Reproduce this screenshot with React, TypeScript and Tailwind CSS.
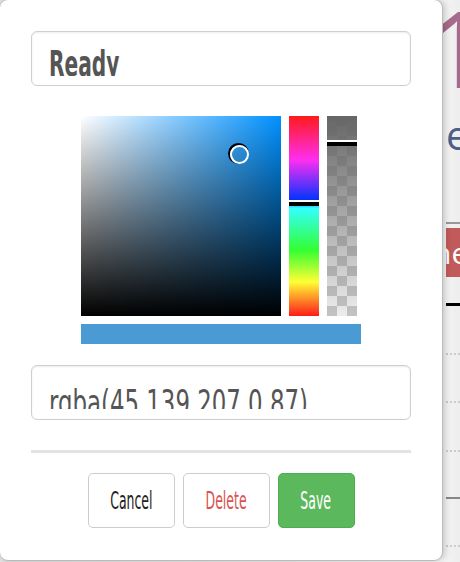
const condensed = { fontFamily: '"DejaVu Sans", "Liberation Sans", sans-serif' }

function Field({ text, bold }: { text: string; bold?: boolean }) {
  return (
    <div className="h-[55px] rounded-[6px] border-[1.5px] border-[#cfcfcf] bg-white px-[17px] shadow-[inset_0_1px_2px_rgba(0,0,0,0.08)]">
      <div className={bold ? "h-[44px] overflow-hidden" : "h-[43px] overflow-hidden"}>
        <div
          style={condensed}
          className={
            bold
              ? "pt-[12px] text-[36px] leading-[40px] font-bold text-[#555] whitespace-nowrap"
              : "pt-[17px] text-[36px] leading-[40px] text-[#555] whitespace-nowrap"
          }
        >
          <span className={bold ? "inline-block origin-left scale-x-[0.56]" : "inline-block origin-left scale-x-[0.635]"}>
            {text}
          </span>
        </div>
      </div>
    </div>
  )
}

function Picker() {
  return (
    <div className="mx-auto w-[280px]">
      <div className="flex gap-2">
        <div className="relative h-[200px] w-[200px] bg-[#0091ff] bg-[linear-gradient(to_top,#000,transparent),linear-gradient(to_right,#fff,transparent)]">
          <div className="absolute left-[149px] top-[29px] h-[19px] w-[19px] rounded-full border-2 border-white shadow-[-1px_-1px_0_1px_#000]" />
        </div>
        <div className="relative h-[200px] w-[30px] bg-[linear-gradient(to_bottom,#ff1a1a,#ff2ef0_22%,#0033ff_42%,#33ffff_46%,#33ff33_67%,#ffff33_83%,#ff1a1a)]">
          <div className="absolute left-0 top-[84px] h-[6px] w-full border-t-2 border-white bg-black" />
        </div>
        <div className="relative h-[200px] w-[30px] bg-[repeating-conic-gradient(#c8c8c8_0_25%,#f4f4f4_0_50%)] bg-size-[20px_20px]">
          <div className="absolute inset-0 bg-[linear-gradient(to_bottom,#666,rgba(102,102,102,0.05))]" />
          <div className="absolute left-0 top-[24px] h-[6px] w-full border-t-2 border-white bg-black" />
        </div>
      </div>
      <div className="mt-2 h-5 w-full bg-[#4a9bd4]" />
    </div>
  )
}

function Button({ label, kind }: { label: string; kind: "plain" | "danger" | "save" }) {
  const base = "flex h-[55px] items-center justify-center rounded-[5px] border-[1.5px] text-[25px] leading-none"
  const styles = {
    plain: "w-[87px] border-[#cccccc] bg-white text-[#222]",
    danger: "w-[87px] border-[#cccccc] bg-white text-[#d9534f]",
    save: "w-[77px] border-[#4cae4c] bg-[#5cb85c] text-white",
  }
  return (
    <button style={condensed} className={`${base} ${styles[kind]}`}>
      <span className="inline-block scale-x-[0.5]">{label}</span>
    </button>
  )
}

export default function App() {
  return (
    <div className="relative h-[562px] w-[460px] overflow-hidden bg-[linear-gradient(to_right,#e2e2e2,#f6f6f6_440px,#ededed)]">
      {/* page behind the popover */}
      <div className="pl-[446px]" style={{ fontFamily: '"Open Sans", sans-serif' }}>
        <div className="-ml-[18px] h-[105px] overflow-hidden text-[106px] leading-[106px] text-[#a86a8c] whitespace-nowrap">
          <div className="-mt-[6px]">1</div>
        </div>
        <div className="h-[60px] text-[40px] leading-[60px] text-[#4a6088] whitespace-nowrap">es</div>
        <div className="mt-[57px] h-[2px] bg-[#999]" />
        <div className="mt-1 flex h-[49px] items-center overflow-hidden bg-[#c15a5a] text-[30px] leading-none text-white whitespace-nowrap">
          <span className="-ml-[13px]">ne</span>
        </div>
        <div className="mt-[26px] h-[3px] bg-black" />
        <div className="mt-[47px] border-t-2 border-dotted border-[#ccc]" />
        <div className="mt-[46px] border-t-2 border-dotted border-[#ccc]" />
        <div className="mt-[47px] border-t-2 border-dotted border-[#ccc]" />
        <div className="mt-[45px] h-[2px] bg-[#888]" />
        <div className="mt-[46px] border-t-2 border-dotted border-[#ccc]" />
      </div>

      {/* popover */}
      <div className="absolute left-[-1px] top-[-1px] h-[562px] w-[444px] rounded-[9px] border border-[#bbbbbb] bg-white px-[31px] pt-[31px] shadow-[2px_0_6px_rgba(0,0,0,0.2)]">
        <Field text="Ready" bold />
        <div className="mt-[30px]">
          <Picker />
        </div>
        <div className="mt-[21px]">
          <Field text="rgba(45,139,207,0.87)" />
        </div>
        <div className="mt-[30px] h-[3px] bg-[#e3e3e3]" />
        <div className="mt-[20px] flex justify-center gap-2">
          <Button label="Cancel" kind="plain" />
          <Button label="Delete" kind="danger" />
          <Button label="Save" kind="save" />
        </div>
      </div>
    </div>
  )
}
